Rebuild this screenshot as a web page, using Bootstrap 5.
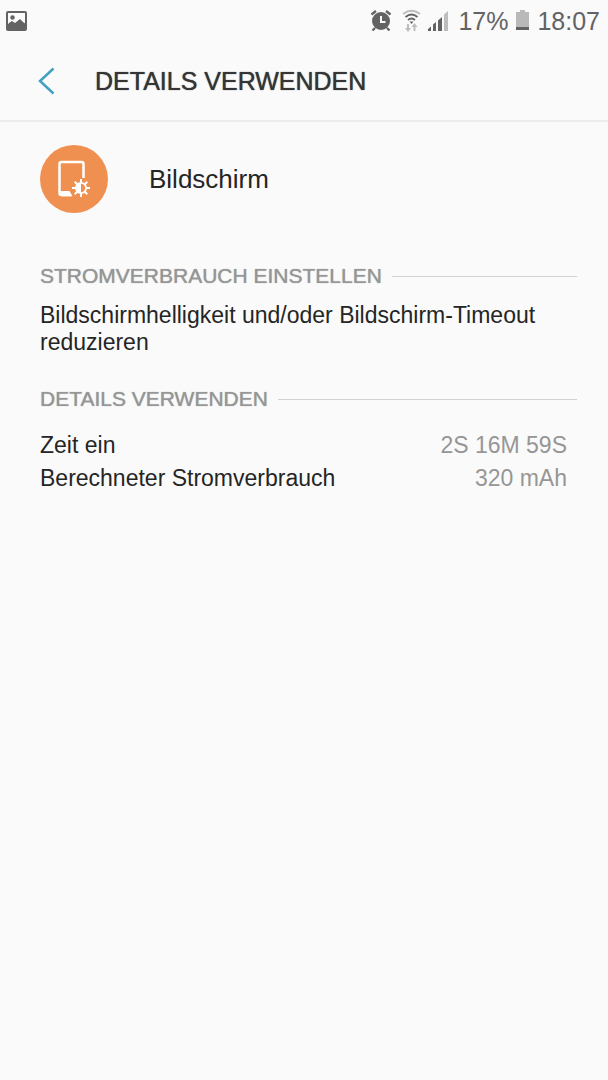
<!DOCTYPE html>
<html lang="de">
<head>
<meta charset="utf-8">
<meta name="viewport" content="width=device-width, initial-scale=1">
<title>Details verwenden</title>
<link href="https://cdn.jsdelivr.net/npm/bootstrap@5.3.0/dist/css/bootstrap.min.css" rel="stylesheet">
<style>
  body { font-family: "Liberation Sans", Arial, sans-serif; background: #fafafa; color: #252525; font-size: 23px; line-height: 27px; }
  .status-bar { height: 42px; color: #636363; font-size: 25px; padding: 0 8px 0 6px; }
  .app-bar { height: 80px; padding: 0 32px; border-bottom: 2px solid #ececec; }
  .back-btn { width: 32px; color: #459fc0; }
  .app-title { font-size: 25px; line-height: 32px; color: #353535; margin-left: 31px; text-shadow: 0 0 1px #353535; }
  .item-head { padding: 23px 40px; gap: 41px; }
  .item-name { font-size: 26px; line-height: 32px; }
  .block { padding: 0 31px 0 40px; margin-top: 26px; }
  .block-title { gap: 10px; font-size: 21px; line-height: 28px; color: #969696; text-shadow: 0 0 1px #969696; }
  .block-title::after { content: ""; flex: 1; height: 1px; background: #d2d2d2; }
  .block-text { margin: 12px 0 29px; }
  .facts { line-height: 33px; padding-right: 10px; margin: 16px 0 0; }
  .facts dd { color: #969696; }
</style>
</head>
<body>
<header>
  <div class="status-bar d-flex align-items-center justify-content-between">
    <svg width="21" height="20" viewBox="0 0 21 20" aria-hidden="true"><rect x="1" y="1" width="19" height="18" rx="1" fill="none" stroke="#636363" stroke-width="2"/><circle cx="6.500" cy="6.500" r="2.200" fill="#636363"/><path d="M1 15 3 12 6 10 9 12 14 8 17 11 20 13V19H1Z" fill="#636363"/></svg>
    <div class="d-flex align-items-center">
      <svg width="80" height="24" viewBox="0 0 80 24" aria-hidden="true">
        <g fill="#636363" stroke="#636363">
          <circle cx="11" cy="12" r="9" stroke="none"/>
          <path d="M1.500 5.500 6 2M16 2 20.500 5.500M5 19 2.500 21.500M17 19 19.500 21.500" stroke-width="2.400" fill="none"/>
          <path d="M11 7v6h4.500" stroke="#fafafa" stroke-width="2" fill="none"/>
        </g>
        <g fill="none" stroke-width="2">
          <path d="M33 5Q41.500-1.500 50 5" stroke="#bdbdbd"/>
          <path d="M35.500 8Q41.500 3 47.500 8M38 11Q41.500 8 45 11" stroke="#636363"/>
        </g>
        <path d="M39.500 12.500h4l-2 2.500Z" fill="#636363"/>
        <path d="M37 15h2v4h2l-3 4-3-4h2ZM43.500 22h2v-4h2l-3-4-3 4h2Z" fill="#bdbdbd"/>
        <path d="M58 22v-2l3-2.500V22ZM63 22v-6.500l3-2.500v9ZM68 22V11.500l4-3.500v14Z" fill="#636363"/>
        <path d="M74 22V5.500L78 2v20Z" fill="#bdbdbd"/>
      </svg>
      <span class="ms-2">17%</span>
      <svg class="mx-2" width="13" height="22" viewBox="0 0 13 22" aria-hidden="true"><path d="M4 0h5v2h4v16H0V2h4Z" fill="#b9b9b9"/><path d="M0 17h13v3H0Z" fill="#636363"/></svg>
      <span>18:07</span>
    </div>
  </div>
  <div class="app-bar d-flex align-items-center">
    <button type="button" class="back-btn btn p-0 border-0 d-flex" aria-label="Zurück"><svg width="32" height="28" viewBox="0 0 32 28" fill="none" stroke="currentColor" stroke-width="2.500"><path d="M21.500 1.500 8 14 21.500 26.500"/></svg></button>
    <h1 class="app-title mb-0 fw-normal">DETAILS VERWENDEN</h1>
  </div>
</header>
<main>
  <div class="item-head d-flex align-items-center">
    <svg width="68" height="68" viewBox="0 0 68 68" aria-hidden="true">
      <circle cx="34" cy="34" r="34" fill="#f09050"/>
      <path d="M43.500 33V19Q43.500 17 41.500 17H21.500Q19.500 17 19.500 19V48Q19.500 50 21.500 50H31" fill="none" stroke="#fff" stroke-width="2.500"/>
      <path d="M20 46h9.500L32.500 51.250H21Z" fill="#fff"/>
      <g transform="translate(41 43)"><g stroke="#fff" stroke-width="2"><path d="M0-9V9M-9 0H9M-6.300-6.300 6.300 6.300M6.300-6.300-6.300 6.300"/></g><circle r="6" fill="#fff"/><path d="M0-4.200A4.200 4.200 0 0 1 0 4.200Z" fill="#f09050"/></g>
    </svg>
    <div class="item-name">Bildschirm</div>
  </div>
  <section class="block">
    <h2 class="block-title d-flex align-items-center mb-0 fw-normal">STROMVERBRAUCH EINSTELLEN</h2>
    <p class="block-text">Bildschirmhelligkeit und/oder Bildschirm-Timeout reduzieren</p>
  </section>
  <section class="block">
    <h2 class="block-title d-flex align-items-center mb-0 fw-normal">DETAILS VERWENDEN</h2>
    <dl class="facts">
      <div class="d-flex justify-content-between"><dt class="fw-normal">Zeit ein</dt><dd class="mb-0">2S 16M 59S</dd></div>
      <div class="d-flex justify-content-between"><dt class="fw-normal">Berechneter Stromverbrauch</dt><dd class="mb-0">320 mAh</dd></div>
    </dl>
  </section>
</main>
<script src="https://cdn.jsdelivr.net/npm/bootstrap@5.3.0/dist/js/bootstrap.bundle.min.js"></script>
</body>
</html>
